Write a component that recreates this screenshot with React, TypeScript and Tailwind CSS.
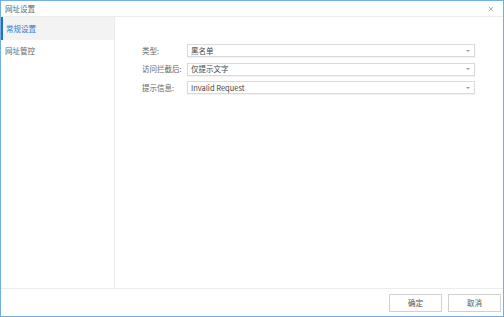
import { X } from 'lucide-react'

const fields = [
  { label: '类型:', value: '黑名单' },
  { label: '访问拦截后:', value: '仅提示文字' },
  { label: '提示信息:', value: 'Invalid Request' },
]

export default function App() {
  return (
    <div
      className="flex h-[317px] w-[504px] flex-col border border-[#76aee0] bg-white text-[7.5px] text-[#666]"
      style={{ fontFamily: '"Segoe UI", "Noto Sans CJK SC", sans-serif' }}
    >
      {/* 标题栏 */}
      <div className="flex h-[16px] items-center justify-between border-b border-[#ececec] pl-[4px] pr-[8px]">
        <span className="leading-none">网址设置</span>
        <X className="h-[8px] w-[8px] text-[#777]" strokeWidth={1.75} />
      </div>

      <div className="flex flex-1">
        {/* 左侧菜单 */}
        <div className="w-[114px] border-r border-[#ececec]">
          <div className="flex h-[23px] items-center border-l-[2px] border-[#1a72c9] bg-[#f3f3f3] pl-[3px] text-[#2a7bd0]">
            常规设置
          </div>
          <div className="flex h-[21px] items-center pl-[4px]">网址管控</div>
        </div>

        {/* 内容 */}
        <div className="flex-1 pl-[27px] pr-[28px] pt-[27px]">
          <div className="flex flex-col gap-[5.5px]">
            {fields.map((f) => (
              <div key={f.label} className="flex h-[13px] items-center">
                <span className="w-[45px] shrink-0">{f.label}</span>
                <div className="flex h-[13px] flex-1 items-center justify-between border border-[#dadada] pl-[3px] pr-[4px] text-[#444] shadow-[0_1px_1px_rgba(0,0,0,0.05)]">
                  <span>{f.value}</span>
                  <span className="h-0 w-0 border-x-[2px] border-t-[2px] border-x-transparent border-t-[#999]" />
                </div>
              </div>
            ))}
          </div>
        </div>
      </div>

      {/* 底部按钮 */}
      <div className="flex h-[28px] items-center justify-end gap-[6px] border-t border-[#ececec] pr-[2px]">
        <button className="h-[18px] w-[53px] border border-[#d0d0d0] bg-white text-[7.5px] text-[#555]">确定</button>
        <button className="h-[18px] w-[53px] border border-[#d0d0d0] bg-white text-[7.5px] text-[#555]">取消</button>
      </div>
    </div>
  )
}
